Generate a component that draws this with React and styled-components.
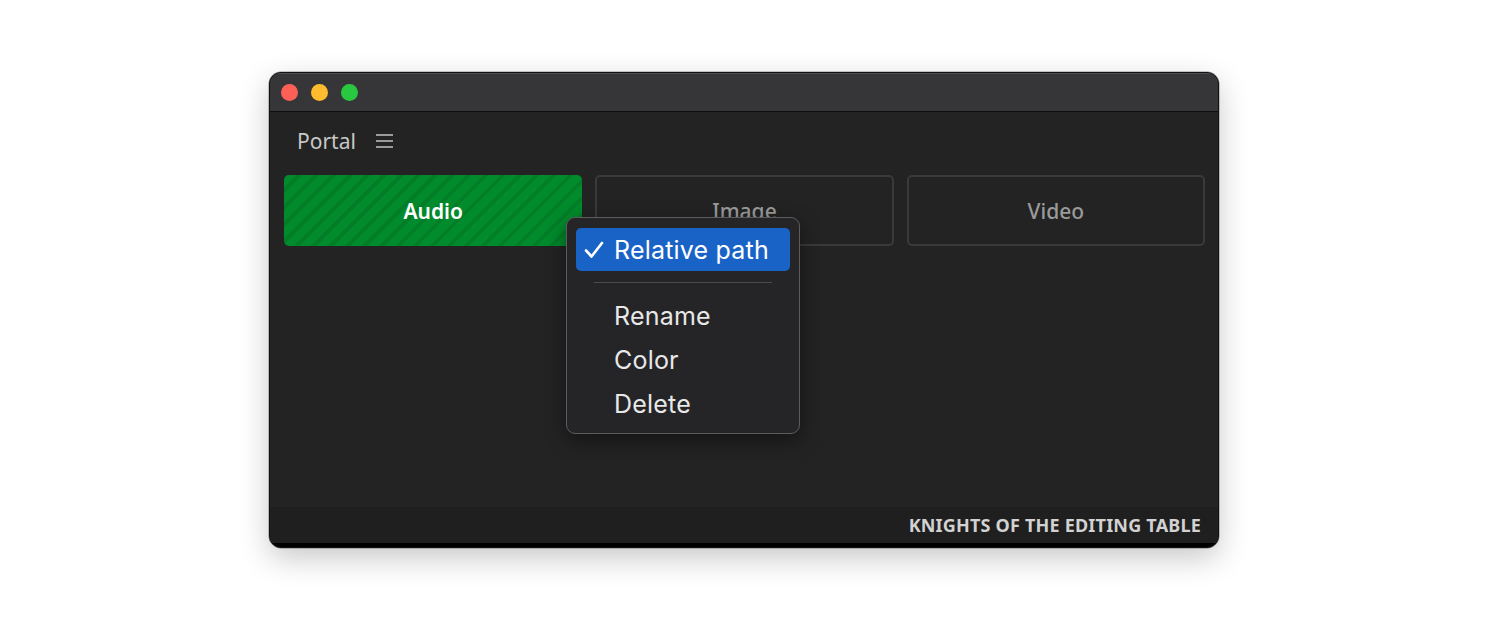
import React from 'react';
import styled, { createGlobalStyle } from 'styled-components';

const GlobalStyle = createGlobalStyle`
  html, body {
    margin: 0;
    background: #ffffff;
  }
`;

const Page = styled.div`
  padding: 72px 0 0 269px;
  height: 620px;
  box-sizing: border-box;
`;

const Window = styled.div`
  position: relative;
  width: 950px;
  height: 476px;
  box-sizing: border-box;
  display: flex;
  flex-direction: column;
  border: 1px solid #111;
  border-radius: 12px;
  overflow: hidden;
  background: #232323;
  box-shadow: 0 10px 30px rgba(0, 0, 0, 0.22), 0 0 0 0.5px rgba(0, 0, 0, 0.4);
`;

const TitleBar = styled.div`
  display: flex;
  align-items: center;
  gap: 13px;
  height: 38px;
  padding-left: 11px;
  background: #363638;
  border-bottom: 1px solid #0e0e0e;
  box-shadow: inset 0 1px 0 rgba(255, 255, 255, 0.12);
  flex-shrink: 0;
`;

const Light = styled.span`
  width: 17px;
  height: 17px;
  border-radius: 50%;
  background: ${({ color }) => color};
`;

const Content = styled.div`
  flex: 1;
  display: flex;
  flex-direction: column;
  padding: 0 13px 0 14px;
`;

const Header = styled.div`
  display: flex;
  align-items: center;
  gap: 20px;
  height: 63px;
  box-sizing: border-box;
  padding: 0 0 5px 13px;
  font-family: 'Noto Sans', 'Open Sans', sans-serif;
  font-size: 21px;
  color: #c8c8c8;
`;

const Menu = styled.svg`
  display: block;
`;

const Tabs = styled.div`
  display: grid;
  grid-template-columns: 1fr 1fr 1fr;
  gap: 13px;
`;

const Tab = styled.div`
  height: 71px;
  box-sizing: border-box;
  display: flex;
  align-items: center;
  justify-content: center;
  border-radius: 5px;
  font-family: 'Noto Sans', 'Open Sans', sans-serif;
  font-size: 21px;
  font-weight: ${({ active }) => (active ? 600 : 500)};
  color: ${({ active }) => (active ? '#ffffff' : '#9a9a9a')};
  border: ${({ active }) => (active ? 'none' : '2px solid #3a3a3a')};
  background: ${({ active }) =>
    active
      ? 'repeating-linear-gradient(-45deg, #018b2c 0px, #018b2c 8px, #037e28 8px, #037e28 12px)'
      : 'transparent'};
`;

const Footer = styled.div`
  height: 36px;
  display: flex;
  align-items: center;
  justify-content: flex-end;
  padding-right: 17px;
  background: #1f1f1f;
  border-bottom: 4px solid #000;
  font-family: 'Noto Sans', 'Open Sans', sans-serif;
  font-weight: 700;
  font-size: 18px;
  letter-spacing: 0.2px;
  color: #d2d2d2;
  flex-shrink: 0;
`;

const Popup = styled.div`
  position: absolute;
  left: 296px;
  top: 144px;
  width: 234px;
  box-sizing: border-box;
  padding: 10px 9px 7px 9px;
  background: #252527;
  border: 1.5px solid #5c5c5e;
  border-radius: 9px;
  box-shadow: 0 6px 20px rgba(0, 0, 0, 0.45);
  font-family: Inter, 'Noto Sans', sans-serif;
  font-size: 25px;
  font-weight: 400;
  letter-spacing: 0.2px;
  color: #e8e8e8;
`;

const Item = styled.div`
  height: ${({ selected }) => (selected ? 43 : 44)}px;
  display: flex;
  align-items: center;
  padding-left: 8px;
  border-radius: 5px;
  background: ${({ selected }) => (selected ? '#1a63c6' : 'transparent')};
  color: ${({ selected }) => (selected ? '#ffffff' : '#e8e8e8')};
`;

const Check = styled.span`
  width: 30px;
  display: inline-flex;
`;

const Separator = styled.div`
  height: 1px;
  margin: 11px 18px 11px;
  background: #4b4b4d;
`;

export default function App() {
  return (
    <Page>
      <GlobalStyle />
      <Window>
        <TitleBar>
          <Light color="#fe5f57" />
          <Light color="#febc2e" />
          <Light color="#28c840" />
        </TitleBar>
        <Content>
          <Header>
            Portal
            <Menu width="17" height="14" viewBox="0 0 17 14">
              <path d="M0 1h17M0 7h17M0 13h17" stroke="#c4c4c4" strokeWidth="1.6" />
            </Menu>
          </Header>
          <Tabs>
            <Tab active>Audio</Tab>
            <Tab>Image</Tab>
            <Tab>Video</Tab>
          </Tabs>
        </Content>
        <Footer>KNIGHTS OF THE EDITING TABLE</Footer>
        <Popup>
          <Item selected>
            <Check>
              <svg width="20" height="18" viewBox="0 0 20 18">
                <path d="M2 9.5l5.5 6L18 2" fill="none" stroke="#fff" strokeWidth="2.6" strokeLinecap="round" strokeLinejoin="round" />
              </svg>
            </Check>
            Relative path
          </Item>
          <Separator />
          <Item>
            <Check />
            Rename
          </Item>
          <Item>
            <Check />
            Color
          </Item>
          <Item>
            <Check />
            Delete
          </Item>
        </Popup>
      </Window>
    </Page>
  );
}
